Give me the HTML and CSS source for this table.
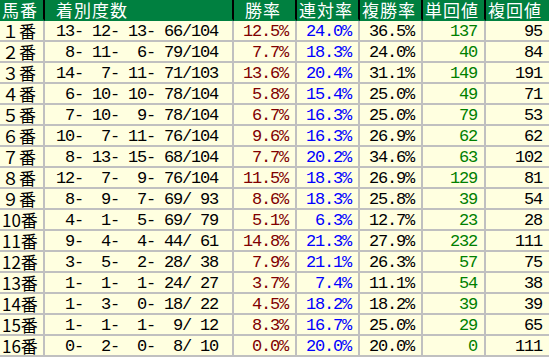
FILE: index.html
```html
<!DOCTYPE html>
<html lang="ja">
<head>
<meta charset="utf-8">
<title>馬番別成績</title>
<link rel="stylesheet" href="styles.css">
</head>
<body>
<div class="grid">
  <div class="h c1">馬番</div><div class="h c2">着別度数</div><div class="h c3">勝率</div><div class="h">連対率</div><div class="h">複勝率</div><div class="h">単回値</div><div class="h last">複回値</div>

  <div class="c lab">１番</div><div class="c rec">13- 12- 13- 66/104</div><div class="c n win">12.5%</div><div class="c n ren">24.0%</div><div class="c n fuku">36.5%</div><div class="c n tan">137</div><div class="c n fk last">95</div>
  <div class="c lab">２番</div><div class="c rec"> 8- 11-  6- 79/104</div><div class="c n win">7.7%</div><div class="c n ren">18.3%</div><div class="c n fuku">24.0%</div><div class="c n tan">40</div><div class="c n fk last">84</div>
  <div class="c lab">３番</div><div class="c rec">14-  7- 11- 71/103</div><div class="c n win">13.6%</div><div class="c n ren">20.4%</div><div class="c n fuku">31.1%</div><div class="c n tan">149</div><div class="c n fk last">191</div>
  <div class="c lab">４番</div><div class="c rec"> 6- 10- 10- 78/104</div><div class="c n win">5.8%</div><div class="c n ren">15.4%</div><div class="c n fuku">25.0%</div><div class="c n tan">49</div><div class="c n fk last">71</div>
  <div class="c lab">５番</div><div class="c rec"> 7- 10-  9- 78/104</div><div class="c n win">6.7%</div><div class="c n ren">16.3%</div><div class="c n fuku">25.0%</div><div class="c n tan">79</div><div class="c n fk last">53</div>
  <div class="c lab">６番</div><div class="c rec">10-  7- 11- 76/104</div><div class="c n win">9.6%</div><div class="c n ren">16.3%</div><div class="c n fuku">26.9%</div><div class="c n tan">62</div><div class="c n fk last">62</div>
  <div class="c lab">７番</div><div class="c rec"> 8- 13- 15- 68/104</div><div class="c n win">7.7%</div><div class="c n ren">20.2%</div><div class="c n fuku">34.6%</div><div class="c n tan">63</div><div class="c n fk last">102</div>
  <div class="c lab">８番</div><div class="c rec">12-  7-  9- 76/104</div><div class="c n win">11.5%</div><div class="c n ren">18.3%</div><div class="c n fuku">26.9%</div><div class="c n tan">129</div><div class="c n fk last">81</div>
  <div class="c lab">９番</div><div class="c rec"> 8-  9-  7- 69/ 93</div><div class="c n win">8.6%</div><div class="c n ren">18.3%</div><div class="c n fuku">25.8%</div><div class="c n tan">39</div><div class="c n fk last">54</div>
  <div class="c lab">10番</div><div class="c rec"> 4-  1-  5- 69/ 79</div><div class="c n win">5.1%</div><div class="c n ren">6.3%</div><div class="c n fuku">12.7%</div><div class="c n tan">23</div><div class="c n fk last">28</div>
  <div class="c lab">11番</div><div class="c rec"> 9-  4-  4- 44/ 61</div><div class="c n win">14.8%</div><div class="c n ren">21.3%</div><div class="c n fuku">27.9%</div><div class="c n tan">232</div><div class="c n fk last">111</div>
  <div class="c lab">12番</div><div class="c rec"> 3-  5-  2- 28/ 38</div><div class="c n win">7.9%</div><div class="c n ren">21.1%</div><div class="c n fuku">26.3%</div><div class="c n tan">57</div><div class="c n fk last">75</div>
  <div class="c lab">13番</div><div class="c rec"> 1-  1-  1- 24/ 27</div><div class="c n win">3.7%</div><div class="c n ren">7.4%</div><div class="c n fuku">11.1%</div><div class="c n tan">54</div><div class="c n fk last">38</div>
  <div class="c lab">14番</div><div class="c rec"> 1-  3-  0- 18/ 22</div><div class="c n win">4.5%</div><div class="c n ren">18.2%</div><div class="c n fuku">18.2%</div><div class="c n tan">39</div><div class="c n fk last">39</div>
  <div class="c lab">15番</div><div class="c rec"> 1-  1-  1-  9/ 12</div><div class="c n win">8.3%</div><div class="c n ren">16.7%</div><div class="c n fuku">25.0%</div><div class="c n tan">29</div><div class="c n fk last">65</div>
  <div class="c lab">16番</div><div class="c rec"> 0-  2-  0-  8/ 10</div><div class="c n win">0.0%</div><div class="c n ren">20.0%</div><div class="c n fuku">20.0%</div><div class="c n tan">0</div><div class="c n fk last">111</div>
</div>
</body>
</html>
```

FILE: styles.css
```css
html, body {
  margin: 0;
  padding: 0;
  background: #ffffe0;
}

.grid {
  display: grid;
  grid-template-columns: 45px 189px repeat(5, 63px);
  grid-auto-rows: 21px;
  width: 549px;
  overflow: hidden;
}

.grid > div {
  box-sizing: border-box;
  border-right: 2px solid #c0c0c0;
  border-bottom: 2px solid #c0c0c0;
  white-space: pre;
}

.grid > div.last {
  border-right: none;
}

.h {
  background: #008040;
  color: #ffffff;
  font-family: "Noto Sans CJK JP", sans-serif;
  font-size: 17px;
  line-height: 19px;
  padding-left: 2px;
  letter-spacing: 1px;
  border-right-color: #000000 !important;
  border-bottom-color: #008040 !important;
}

.h.c1 { padding-left: 2px; }
.h.c2 { padding-left: 11px; }
.h.c3 { padding-left: 11px; }

.c {
  background: #ffffe0;
  color: #000000;
}

.lab {
  font-family: "Noto Sans CJK JP", sans-serif;
  font-size: 17px;
  line-height: 19px;
  padding-left: 2px;
}

.rec, .n {
  font-family: "Liberation Mono", "DejaVu Sans Mono", monospace;
  font-size: 17px;
  letter-spacing: -1.2px;
  line-height: 17px;
  padding-top: 2px;
}

.rec {
  padding-left: 11px;
}

.n {
  text-align: right;
  padding-right: 7px;
}

.win { color: #800000; }
.ren { color: #0000ff; }
.fuku { color: #000000; }
.tan { color: #008000; }
.fk { color: #000000; }
```
